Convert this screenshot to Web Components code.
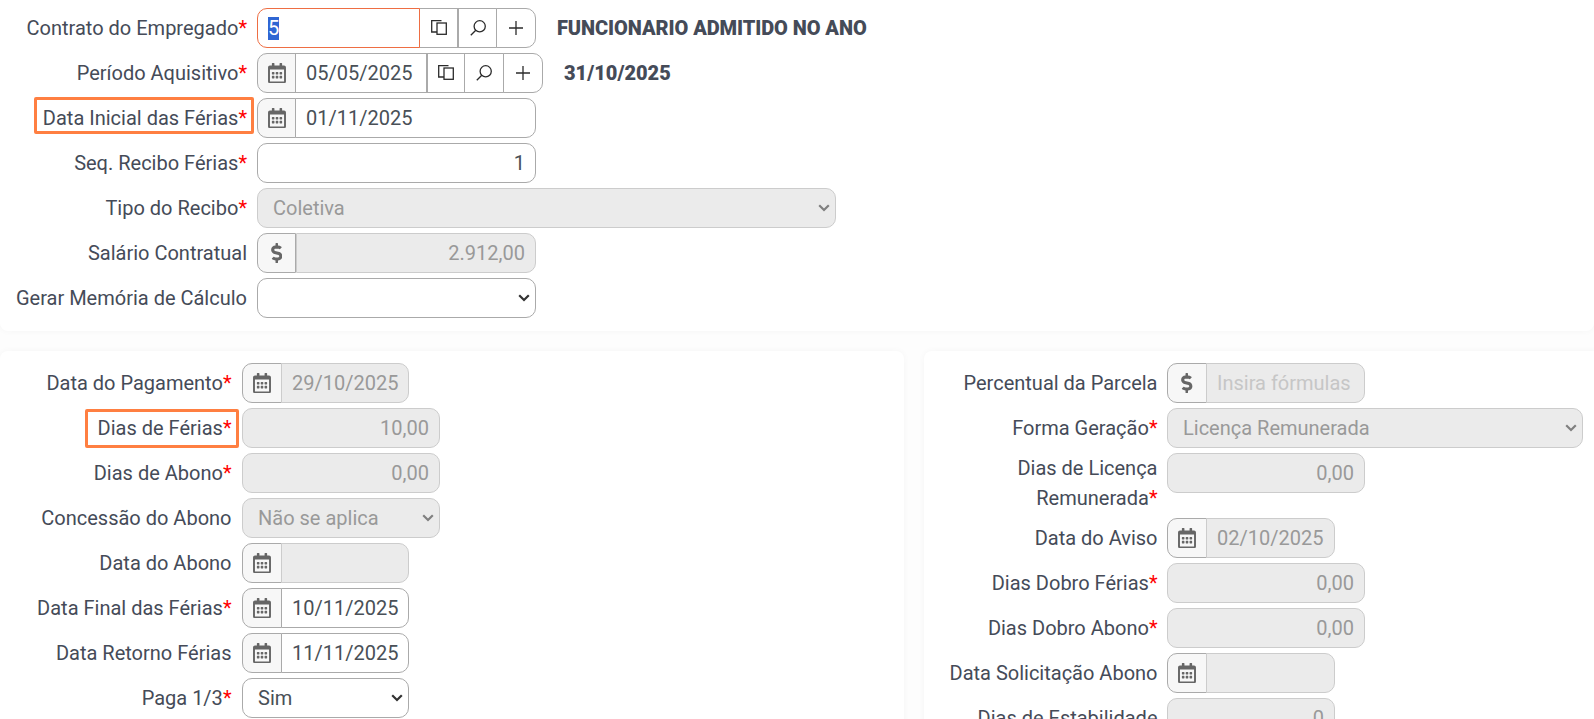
<!DOCTYPE html>
<html lang="pt-BR">
<head>
<meta charset="utf-8">
<title>Férias</title>
<style>
  html, body { margin: 0; height: 100%; overflow: hidden; }
  body {
    background: #fdfdfd;
    color: #454b58;
    font: 20px/30px Roboto, "Liberation Sans", sans-serif;
  }
  .columns { display: flex; gap: 20px; margin-top: 20px; --before-w: 40px; }
  .columns > :first-child { flex: 0 0 904px; }
  .columns > :last-child { flex: 1; }
</style>
</head>
<body>

<ui-card style="--label-w:247px;--label-gap:10px;--card-pad:8px 0 13px;--card-radius:0 0 8px 8px">
  <form-row required>
    Contrato do Empregado
    <field-box style="width:279px">
      <span class="sel" style="background:#2f66d3;color:#fff;display:inline-block;line-height:23px">5</span>
      <field-addon slot="after" icon="copy"></field-addon>
      <field-addon slot="after" icon="search" thick></field-addon>
      <field-addon slot="after" icon="plus" style="width:40px"></field-addon>
    </field-box>
    <strong slot="aside" style="letter-spacing:-.07px">FUNCIONARIO ADMITIDO NO ANO</strong>
  </form-row>
  <form-row required>
    Período Aquisitivo
    <field-box style="width:286px">
      <field-addon slot="before" icon="calendar"></field-addon>
      05/05/2025
      <field-addon slot="after" icon="copy" thick style="width:38px"></field-addon>
      <field-addon slot="after" icon="search" style="width:40px"></field-addon>
      <field-addon slot="after" icon="plus" style="width:40px"></field-addon>
    </field-box>
    <strong slot="aside">31/10/2025</strong>
  </form-row>
  <form-row required>
    <mark-box style="left:34px;top:-1px;width:220px;height:37px"></mark-box>
    Data Inicial das Férias
    <field-box style="width:279px">
      <field-addon slot="before" icon="calendar"></field-addon>
      01/11/2025
    </field-box>
  </form-row>
  <form-row required>
    Seq. Recibo Férias
    <field-box style="width:279px" end>1</field-box>
  </form-row>
  <form-row required>
    Tipo do Recibo
    <field-box style="width:579px" disabled select>Coletiva</field-box>
  </form-row>
  <form-row>
    Salário Contratual
    <field-box style="width:279px" disabled end>
      <field-addon slot="before" icon="dollar" thick-end></field-addon>
      2.912,00
    </field-box>
  </form-row>
  <form-row>
    Gerar Memória de Cálculo
    <field-box style="width:279px" select></field-box>
  </form-row>
</ui-card>

<div class="columns">
  <ui-card style="--label-w:231.5px;--label-gap:10.5px">
    <form-row required>
      Data do Pagamento
      <field-box style="width:167px" disabled>
        <field-addon slot="before" icon="calendar"></field-addon>
        29/10/2025
      </field-box>
    </form-row>
    <form-row required>
      <mark-box style="left:85px;top:1px;width:154px;height:39px"></mark-box>
      Dias de Férias
      <field-box style="width:198px" disabled end>10,00</field-box>
    </form-row>
    <form-row required>
      Dias de Abono
      <field-box style="width:198px" disabled end>0,00</field-box>
    </form-row>
    <form-row>
      Concessão do Abono
      <field-box style="width:198px" disabled select>Não se aplica</field-box>
    </form-row>
    <form-row>
      Data do Abono
      <field-box style="width:167px" disabled>
        <field-addon slot="before" icon="calendar"></field-addon>
      </field-box>
    </form-row>
    <form-row required>
      Data Final das Férias
      <field-box style="width:167px">
        <field-addon slot="before" icon="calendar"></field-addon>
        10/11/2025
      </field-box>
    </form-row>
    <form-row>
      Data Retorno Férias
      <field-box style="width:167px">
        <field-addon slot="before" icon="calendar"></field-addon>
        11/11/2025
      </field-box>
    </form-row>
    <form-row required>
      Paga 1/3
      <field-box style="width:167px" select>Sim</field-box>
    </form-row>
  </ui-card>

  <ui-card style="--label-w:233.5px;--label-gap:9.5px">
    <form-row>
      Percentual da Parcela
      <field-box style="width:198px" disabled>
        <field-addon slot="before" icon="dollar"></field-addon>
        <span style="color:#c6c6c6">Insira fórmulas</span>
      </field-box>
    </form-row>
    <form-row required>
      Forma Geração
      <field-box style="width:416px" disabled select>Licença Remunerada</field-box>
    </form-row>
    <form-row required>
      Dias de Licença Remunerada
      <field-box style="width:198px" disabled end>0,00</field-box>
    </form-row>
    <form-row>
      Data do Aviso
      <field-box style="width:168px" disabled>
        <field-addon slot="before" icon="calendar"></field-addon>
        02/10/2025
      </field-box>
    </form-row>
    <form-row required>
      Dias Dobro Férias
      <field-box style="width:198px" disabled end>0,00</field-box>
    </form-row>
    <form-row required>
      Dias Dobro Abono
      <field-box style="width:198px" disabled end>0,00</field-box>
    </form-row>
    <form-row>
      Data Solicitação Abono
      <field-box style="width:168px" disabled>
        <field-addon slot="before" icon="calendar"></field-addon>
      </field-box>
    </form-row>
    <form-row>
      Dias de Estabilidade
      <field-box style="width:168px" disabled end>0</field-box>
    </form-row>
  </ui-card>
</div>

<script>
const icons = {
  calendar: `<svg width="18" height="20.5" viewBox="0 0 448 512" fill="#666"><path d="M148 288h-40c-6.6 0-12-5.4-12-12v-40c0-6.6 5.4-12 12-12h40c6.6 0 12 5.4 12 12v40c0 6.6-5.4 12-12 12zm108-12v-40c0-6.6-5.4-12-12-12h-40c-6.6 0-12 5.4-12 12v40c0 6.6 5.4 12 12 12h40c6.6 0 12-5.4 12-12zm96 0v-40c0-6.6-5.4-12-12-12h-40c-6.6 0-12 5.4-12 12v40c0 6.6 5.4 12 12 12h40c6.6 0 12-5.4 12-12zm-96 96v-40c0-6.6-5.4-12-12-12h-40c-6.6 0-12 5.4-12 12v40c0 6.6 5.4 12 12 12h40c6.6 0 12-5.4 12-12zm-96 0v-40c0-6.6-5.4-12-12-12h-40c-6.6 0-12 5.4-12 12v40c0 6.6 5.4 12 12 12h40c6.6 0 12-5.4 12-12zm192 0v-40c0-6.6-5.4-12-12-12h-40c-6.6 0-12 5.4-12 12v40c0 6.6 5.4 12 12 12h40c6.6 0 12-5.4 12-12zm96-260v352c0 26.5-21.5 48-48 48H48c-26.5 0-48-21.5-48-48V112c0-26.5 21.5-48 48-48h48V12c0-6.6 5.4-12 12-12h40c6.6 0 12 5.4 12 12v52h128V12c0-6.6 5.4-12 12-12h40c6.6 0 12 5.4 12 12v52h48c26.5 0 48 21.5 48 48zm-48 346V160H48v298c0 3.3 2.7 6 6 6h340c3.3 0 6-2.7 6-6z"/></svg>`,
  dollar: `<svg width="11.5" height="20" viewBox="0 0 288 512" fill="#666"><path d="M209.2 233.4l-108-31.6C88.7 198.2 80 186.5 80 173.5c0-16.3 13.2-29.5 29.5-29.5h66.3c12.2 0 24.2 3.7 34.2 10.5 6.1 4.1 14.3 3.1 19.5-2l34.8-34c7.1-6.9 6.1-18.4-1.8-24.5C238 74.8 207.4 64.1 176 64V16c0-8.8-7.2-16-16-16h-32c-8.8 0-16 7.2-16 16v48h-2.5C45.8 64-5.4 118.7.5 183.6c4.2 46.1 39.4 83.6 83.8 96.6l102.5 30c12.5 3.7 21.2 15.3 21.2 28.3 0 16.3-13.2 29.5-29.5 29.5h-66.3C100 368 88 364.3 78 357.5c-6.1-4.1-14.3-3.1-19.5 2l-34.8 34c-7.1 6.9-6.1 18.4 1.8 24.5 24.5 19.2 55.1 29.9 86.5 30v48c0 8.8 7.2 16 16 16h32c8.8 0 16-7.2 16-16v-48.2c46.6-.9 90.3-28.6 105.7-72.7 21.5-61.6-14.6-124.8-72.5-141.7z"/></svg>`,
  copy: `<svg width="16" height="16" viewBox="0 0 16 16" fill="none" stroke="#2b2b2b" stroke-width="1.3"><path d="M10.5 .7H.7V12H6"/><rect x="6" y="3" width="9.3" height="11.3"/></svg>`,
  search: `<svg width="16" height="16" viewBox="0 0 16 16" fill="none" stroke="#2b2b2b" stroke-width="1.3"><circle cx="9.7" cy="6.3" r="5.6"/><path d="M5.8 10.2L.8 15.2"/></svg>`,
  plus: `<svg width="16" height="16" viewBox="0 0 16 16" fill="none" stroke="#2b2b2b" stroke-width="1.3"><path d="M8 1v14M1 8h14"/></svg>`
};

class UiCard extends HTMLElement {
  constructor() {
    super();
    this.attachShadow({ mode: "open" });
    this.shadowRoot.innerHTML = `
      <style>
        :host {
          display: flex;
          flex-direction: column;
          gap: 5px;
          padding: var(--card-pad, 12px 0 12px);
          background: #fff;
          border-radius: var(--card-radius, 8px);
          box-shadow: 0 0 7px rgba(0, 0, 0, .035);
        }
      </style>
      <slot></slot>`;
  }
}

class FormRow extends HTMLElement {
  constructor() {
    super();
    this.attachShadow({ mode: "open" });
    this.shadowRoot.innerHTML = `
      <style>
        :host { display: flex; align-items: flex-start; }
        .label {
          position: relative;
          box-sizing: border-box;
          flex: 0 0 var(--label-w);
          min-height: 40px;
          margin-right: var(--label-gap);
          display: flex;
          align-items: center;
          justify-content: flex-end;
          text-align: right;
        }
        .req { display: none; color: #f00; }
        :host([required]) .req { display: inline; }
        .aside { margin-left: 21px; line-height: 40px; font-weight: 600; }
      </style>
      <div class="label"><span><slot></slot><span class="req">*</span></span></div>
      <slot name="control"></slot>
      <div class="aside"><slot name="aside"></slot></div>`;
  }

  connectedCallback() {
    const box = this.querySelector("field-box");
    if (box) box.slot = "control";
    // the label text comes with the source indentation, it must touch the asterisk
    for (const node of this.childNodes) {
      if (node.nodeType === Node.TEXT_NODE) node.textContent = node.textContent.trim();
    }
  }
}

class MarkBox extends HTMLElement {
  constructor() {
    super();
    this.attachShadow({ mode: "open" });
    this.shadowRoot.innerHTML = `
      <style>
        :host {
          position: absolute;
          box-sizing: border-box;
          border: 3px solid #ff7f41;
          border-radius: 2px;
        }
      </style>`;
  }
}

class FieldAddon extends HTMLElement {
  constructor() {
    super();
    this.attachShadow({ mode: "open" });
    this.shadowRoot.innerHTML = `
      <style>
        :host {
          box-sizing: border-box;
          flex: none;
          width: 39px;
          height: 40px;
          margin-left: -1px;
          border: 1px solid #aaa;
          background: #fff;
          display: flex;
          align-items: center;
          justify-content: center;
        }
        :host([thick]) { margin-left: 0; }
        :host([slot="before"]) {
          width: var(--before-w, 39px);
          margin-left: 0;
          background: #f7f7f7;
          border-radius: 10px 0 0 10px;
        }
        :host(:last-child[slot="after"]) { border-radius: 0 10px 10px 0; }
        svg { display: block; }
      </style>
      ${icons[this.getAttribute("icon")]}`;
  }
}

class FieldBox extends HTMLElement {
  constructor() {
    super();
    this.attachShadow({ mode: "open" });
    this.shadowRoot.innerHTML = `
      <style>
        :host { display: flex; flex: none; height: 40px; color: #495057; }
        .main {
          position: relative;
          box-sizing: border-box;
          flex: 1;
          min-width: 0;
          height: 40px;
          padding: 0 10px;
          border: 1px solid #aaa;
          border-radius: 10px;
          background: #fff;
          display: flex;
          align-items: center;
          white-space: nowrap;
        }
        .has-before .main { border-top-left-radius: 0; border-bottom-left-radius: 0; margin-left: -1px; }
        .has-before.no-overlap .main { margin-left: 0; }
        .has-after .main { border-top-right-radius: 0; border-bottom-right-radius: 0; }
        .wrap { display: flex; width: 100%; }
        :host([disabled]) .main { background: #ebebeb; border-color: #ccc; color: #999; }
        :host([end]) .main { justify-content: flex-end; }
        :host([select]) .main { padding-left: 15px; }
        :host([focused]) .main { border-color: #ee6e43; z-index: 1; }
        .chevron { display: none; position: absolute; right: 5px; top: 15px; }
        :host([select]) .chevron { display: block; }
        .chevron path { stroke: #333; }
        :host([disabled]) .chevron path { stroke: #808080; }
      </style>
      <div class="wrap">
        <slot name="before"></slot>
        <div class="main">
          <slot></slot>
          <svg class="chevron" width="12" height="8" viewBox="0 0 12 8" fill="none"><path d="M1.2 1.2L6 6l4.8-4.8" stroke-width="2.2"/></svg>
        </div>
        <slot name="after"></slot>
      </div>`;
  }

  connectedCallback() {
    const wrap = this.shadowRoot.querySelector(".wrap");
    wrap.classList.toggle("has-before", !!this.querySelector('[slot="before"]'));
    wrap.classList.toggle("has-after", !!this.querySelector('[slot="after"]'));
    wrap.classList.toggle("no-overlap", !!this.querySelector("[thick-end]"));
    if (this.querySelector(".sel")) this.setAttribute("focused", "");
  }
}

customElements.define("ui-card", UiCard);
customElements.define("form-row", FormRow);
customElements.define("mark-box", MarkBox);
customElements.define("field-addon", FieldAddon);
customElements.define("field-box", FieldBox);
</script>
</body>
</html>
